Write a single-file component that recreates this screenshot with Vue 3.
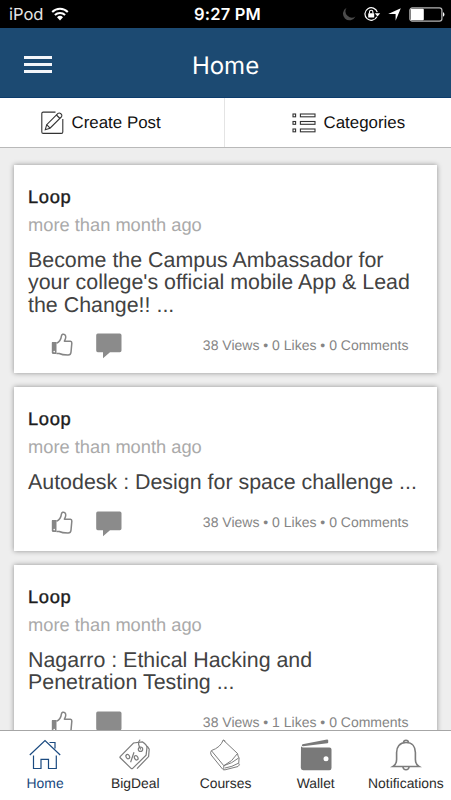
<template>
  <div class="app">
    <div class="status-bar">
      <div class="status-left">
        <span class="carrier">iPod</span>
        <svg class="wifi" width="18" height="14" viewBox="0 0 18 14">
          <path d="M1.2 5A11 11 0 0 1 16.8 5" />
          <path d="M3.9 8A7.2 7.2 0 0 1 14.1 8" />
          <path class="dot" d="M6 10.2a4.3 4.3 0 0 1 6 0L9 13.4z" />
        </svg>
      </div>
      <span class="clock">9:27 PM</span>
      <div class="status-right">
        <svg width="14" height="14" viewBox="0 0 14 14">
          <path d="M4.600 .8A6.600 6.600 0 1 0 13.500 9.600A6.400 6.400 0 0 1 4.600 .8z" fill="#4b4b4b" />
        </svg>
        <svg class="lock" width="17" height="14" viewBox="0 0 17 14">
          <path d="M12.900 9.800A6.300 6.300 0 1 1 13.300 5.200" fill="none" stroke="#fff" stroke-width="1.200" />
          <path d="M10.800 6.200h5.400l-2.700 3.200z" fill="#fff" />
          <rect x="4.200" y="6.200" width="6" height="4.300" rx=".5" fill="#fff" />
          <path d="M5.500 6.400V4.900a1.700 1.700 0 0 1 3.400 0v1.500" fill="none" stroke="#fff" stroke-width="1.100" />
        </svg>
        <svg class="arrow" width="13" height="13" viewBox="0 0 13 13">
          <path d="M12.800 .3L7.600 12.700V5.900H.2z" fill="#fff" />
        </svg>
        <svg width="36" height="15" viewBox="0 0 36 15">
          <rect x=".9" y=".9" width="32" height="13.200" rx="2.400" fill="none" stroke="#b4b4b4" stroke-width="1.300" />
          <rect x="1.800" y="1.800" width="13" height="11.400" rx="1" fill="#fff" />
          <path d="M34 5.300c1.900.7 1.900 3.700 0 4.400z" fill="#fff" />
        </svg>
      </div>
    </div>

    <header class="header">
      <button class="menu-btn" aria-label="Menu">
        <span></span>
        <span></span>
        <span></span>
      </button>
      <h1>Home</h1>
    </header>

    <div class="toolbar">
      <button class="tool create">
        <svg width="23" height="24" viewBox="0 0 23 24">
          <path d="M14.5 1.1H2.2Q.8 1.1.8 2.5V21q0 1.4 1.4 1.4h18.2q1.4 0 1.4-1.4V8" />
          <path d="M4.3 18.7l1.4-5L17 2.4q1.3-1 2.9.3t.7 3L9 17.2z" />
          <path d="M5.7 13.7l3.3 3.5M15.4 4l3.6 3.5" />
        </svg>
        Create Post
      </button>
      <button class="tool">
        <svg width="24" height="20" viewBox="0 0 24 20">
          <g v-for="y in [1, 8.5, 16]" :key="y">
            <rect x="1" :y="y" width="2.6" height="2.8" />
            <rect x="8.4" :y="y" width="14.6" height="2.8" />
          </g>
        </svg>
        Categories
      </button>
    </div>

    <main class="feed">
      <article v-for="post in posts" :key="post.id" class="card">
        <h2>{{ post.author }}</h2>
        <p class="time">{{ post.time }}</p>
        <p class="text">{{ post.text }}</p>
        <div class="actions">
          <svg class="like" width="22" height="23" viewBox="0 0 22 23">
            <path d="M1 9h4.5v12H2.5Q.8 21 .8 19.4V10z" fill="#858585" />
            <path
              d="M5.5 10.2C9 8.8 10 6.7 10.4 3.2C10.6 1.2 12.5.7 13.7 1.6C15.4 2.9 14.7 5.7 13.4 8.2H19.4Q21 8.4 20.8 10.4L20 19.3Q19.7 22.3 16.8 22.1Q11 21.9 8.2 20.5H5.5"
              fill="none" stroke="#858585" stroke-width="1.5" stroke-linejoin="round"
            />
            <circle cx="3.2" cy="18.6" r=".8" fill="#fff" />
          </svg>
          <svg class="comment" width="26" height="26" viewBox="0 0 26 26">
            <path d="M1.8.5h22q1.7 0 1.7 1.7v15.4q0 1.7-1.7 1.7H14L7 25.2v-5.9H1.8Q.2 19.3.2 17.6V2.2Q.2.5 1.8.5z" fill="#8b8b8b" />
          </svg>
          <span class="stats">{{ post.views }} Views • {{ post.likes }} Likes • {{ post.comments }} Comments</span>
        </div>
      </article>
    </main>

    <nav class="tab-bar">
      <button
        v-for="tab in tabs"
        :key="tab"
        class="tab"
        :class="{ active: tab === currentTab }"
        @click="currentTab = tab"
      >
        <svg v-if="tab === 'Home'" width="32" height="32" viewBox="0 0 32 32">
          <path d="M.8 16L16 1.5L31.2 16M4.5 16.5v13H12V20.4h7.5v9.1h7.8v-13M20.5 3.5H26v6" />
        </svg>
        <svg v-else-if="tab === 'BigDeal'" width="32" height="32" viewBox="0 0 32 32">
          <path d="M1.4 17.4L14.5 4l8.800-1.200q4.500 3 4.700 5.600l-.9 7.700L13.700 29.400q-.8.700-1.600-.1L1.200 18.800q-.6-.7.2-1.400z" />
          <path d="M28.200 7.200l2 3-.6 7.400L18 29.600" />
          <circle cx="21.500" cy="10.200" r="2.200" />
          <path d="M21.800 10.500C18.500 5 19.600 2 21.200.6M11.600 23.200l3.400-10" />
          <ellipse cx="8.800" cy="17.600" rx="1.700" ry="2.300" transform="rotate(-30 8.800 17.600)" />
          <ellipse cx="17.200" cy="18.800" rx="1.700" ry="2.300" transform="rotate(-30 17.200 18.800)" />
        </svg>
        <svg v-else-if="tab === 'Courses'" class="book" width="32" height="32" viewBox="0 0 32 32">
          <path d="M14.200 1Q11.500 8.500 2.500 11.500Q.8 13.500 2.200 16L13.500 30q1 1.200 2.600.8L29 27.500l1.400-1.600-.7-1.500.4-5.400-1-1.900-.6-2.600z" />
          <path d="M2.500 11.800L14.800 26.700Q23.500 22.500 28.500 14.500M14.800 26.700v4M14.800 26.700Q23 24.500 29.600 19M16 29q7-1 13.500-4.800M14.200 1l2.200 1.200" />
        </svg>
        <svg v-else-if="tab === 'Wallet'" class="solid" width="32" height="32" viewBox="0 0 32 32">
          <path d="M2.500 5.200L27 .5q1-.1 1.200.8v2.200q0 .7-.8.700L3 7.300Q1 7 2.500 5.200z" />
          <path fill-rule="evenodd" d="M1 7.200q1 1.500 3 1.300h25.500q2 0 2 2V29q0 2.200-2.200 2.200H3.200Q.8 31.200.8 28.800zM26 17.300a2.500 2.500 0 1 0 0 5a2.500 2.500 0 1 0 0-5z" />
        </svg>
        <svg v-else class="bell" width="32" height="32" viewBox="0 0 32 32">
          <path d="M16 3.500C9.500 3.500 6.600 8 6.600 13.500v7Q6.500 25.500 3 27.500h26q-3.500-2-3.600-7v-7C25.400 8 22.500 3.500 16 3.500z" />
          <path d="M13.500 3.500q.2-2.300 2.500-2.300t2.500 2.300M12.800 27.500q.5 3.300 3.200 3.300t3.200-3.300" />
        </svg>
        <span>{{ tab }}</span>
      </button>
    </nav>
  </div>
</template>

<script setup>
import { ref } from 'vue'

const currentTab = ref('Home')
const tabs = ['Home', 'BigDeal', 'Courses', 'Wallet', 'Notifications']

const posts = ref([
  {
    id: 1,
    author: 'Loop',
    time: 'more than month ago',
    text: "Become the Campus Ambassador for your college's official mobile App & Lead the Change!! ...",
    views: 38,
    likes: 0,
    comments: 0
  },
  {
    id: 2,
    author: 'Loop',
    time: 'more than month ago',
    text: 'Autodesk : Design for space challenge ...',
    views: 38,
    likes: 0,
    comments: 0
  },
  {
    id: 3,
    author: 'Loop',
    time: 'more than month ago',
    text: 'Nagarro : Ethical Hacking and Penetration Testing ...',
    views: 38,
    likes: 1,
    comments: 0
  }
])
</script>

<style>
body {
  margin: 0;
  overflow: hidden;
}
</style>

<style scoped>
.app {
  display: flex;
  flex-direction: column;
  height: 100vh;
  background: #eeeeee;
  font-family: "Liberation Sans", Arial, sans-serif;
  text-rendering: geometricPrecision;
}

button {
  padding: 0;
  border: none;
  background: none;
  font-family: inherit;
  text-rendering: inherit;
  cursor: pointer;
}

svg {
  display: block;
  flex: none;
}

.status-bar {
  flex: none;
  display: grid;
  grid-template-columns: 1fr auto 1fr;
  align-items: center;
  height: 28px;
  padding: 0 6px 0 9px;
  box-sizing: border-box;
  background: #000;
  color: #fff;
  font-family: Inter, Roboto, sans-serif;
  font-size: 16.5px;
}

.status-left,
.status-right {
  display: flex;
  align-items: center;
}

.status-left {
  gap: 8px;
}

.carrier {
  color: #e6e6e6;
  line-height: 28px;
}

.wifi path {
  fill: none;
  stroke: #fff;
  stroke-width: 2;
}

.wifi .dot {
  fill: #fff;
  stroke: none;
}

.clock {
  padding-left: 1px;
  font-weight: 600;
  letter-spacing: 0.2px;
}

.status-right {
  justify-content: flex-end;
}

.lock {
  margin-left: 8px;
}

.arrow {
  margin: 0 8px 0 7px;
}

.header {
  flex: none;
  display: grid;
  grid-template-columns: 1fr auto 1fr;
  align-items: center;
  height: 70px;
  box-sizing: border-box;
  padding: 4px 24px 0;
  background: #1c4a72;
  border-bottom: 1px solid #0c3c6c;
}

.menu-btn {
  display: flex;
  flex-direction: column;
  gap: 4px;
  width: 28px;
}

.menu-btn span {
  height: 3px;
  background: #f4f6fa;
}

.header h1 {
  margin: 2px 0 0;
  color: #fff;
  font-family: Inter, Roboto, sans-serif;
  font-size: 24px;
  font-weight: 400;
}

.toolbar {
  flex: none;
  display: grid;
  grid-template-columns: 225px 1fr;
  height: 50px;
  box-sizing: border-box;
  background: #fff;
  border-bottom: 1px solid #b9b9b9;
}

.tool {
  display: flex;
  align-items: center;
  gap: 7.5px;
  padding-left: 67px;
  color: #111;
  font-size: 16.9px;
}

.tool.create {
  padding-left: 41px;
  border-right: 1px solid #e4e4e4;
}

.tool svg {
  fill: none;
  stroke: #333;
  stroke-width: 1.1;
}

.feed {
  flex: 1;
  min-height: 0;
  overflow: hidden;
  display: flex;
  flex-direction: column;
  gap: 14px;
  padding: 16.7px 14px 0;
}

.card {
  flex: none;
  padding: 21px 14px 0;
  background: #fff;
  box-shadow: 0 0 5px rgba(0, 0, 0, 0.4);
}

.card h2 {
  margin: 0 0 6px;
  color: #1c1c1c;
  font-size: 18.3px;
  font-weight: 400;
  line-height: 22px;
  letter-spacing: 0.7px;
  -webkit-text-stroke: 0.4px #1c1c1c;
}

.time {
  margin: 0 0 13px;
  color: #aaaaaa;
  font-size: 18.3px;
  line-height: 22px;
}

.text {
  margin: 0;
  color: #424242;
  font-size: 21.4px;
  line-height: 22.5px;
}

.actions {
  display: flex;
  align-items: center;
  height: 57px;
  padding: 0 14.5px 0 23px;
}

.comment {
  margin: 3px 0 0 23px;
}

.stats {
  margin-left: auto;
  color: #858585;
  font-size: 14px;
}

.tab-bar {
  flex: none;
  display: grid;
  grid-template-columns: repeat(5, 1fr);
  height: 70px;
  box-sizing: border-box;
  border-top: 1px solid #a6a6a6;
  background: #fff;
}

.tab {
  display: flex;
  flex-direction: column;
  align-items: center;
  padding-top: 8px;
  color: #2b2b2b;
  font-size: 13.9px;
}

.tab svg {
  margin-bottom: 4px;
  fill: none;
  stroke: #7c7c7c;
  stroke-width: 1.2;
}

.tab .book {
  stroke-width: 1;
}

.tab .solid {
  fill: #797979;
  stroke: none;
}

.tab .bell {
  stroke-width: 1.6;
}

.tab.active {
  color: #1a4a80;
}

.tab.active svg {
  stroke: #1a4a80;
}
</style>
